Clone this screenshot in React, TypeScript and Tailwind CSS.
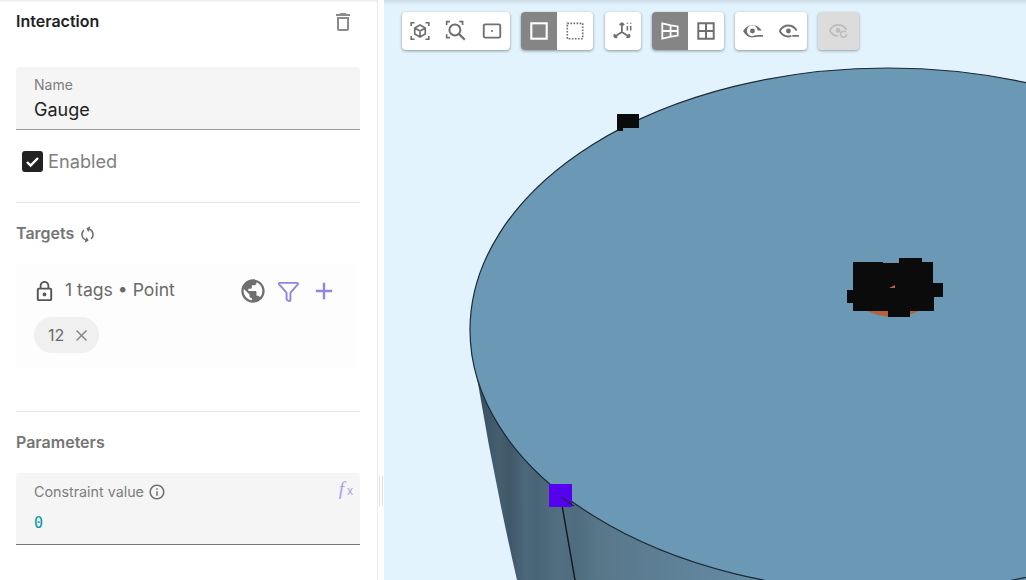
import { Funnel } from "lucide-react";
import { MdAdd, MdClose, MdInfoOutline, MdLockOutline, MdOutlineDelete, MdPublic, MdSync } from "react-icons/md";

const G = "#6f6f6f";

function Btn({ active, children }: { active?: boolean; children: React.ReactNode }) {
  return (
    <div className={active ? "w-9 h-full flex items-center justify-center bg-[#858585] text-white" : "w-9 h-full flex items-center justify-center text-[#6f6f6f]"}>
      {children}
    </div>
  );
}

function Group({ children }: { children: React.ReactNode }) {
  return <div className="h-[38px] flex rounded bg-white overflow-hidden shadow-[0_1px_3px_rgba(0,0,0,0.4)]">{children}</div>;
}

function Ico({ children }: { children: React.ReactNode }) {
  return (
    <svg width="22" height="22" viewBox="0 0 20 20" fill="none" stroke="currentColor" strokeWidth="1.6">
      {children}
    </svg>
  );
}

const Corners = () => <path d="M2 5.500V2.500h3M15 2.500h3v3M18 14.500v3h-3M5 17.500H2v-3" strokeWidth="1.500" />;

function Canvas3D() {
  return (
    <svg className="absolute inset-0 w-full h-full" viewBox="0 0 642 580">
      <defs>
        <linearGradient id="side" x1="93" x2="642" y1="0" y2="0" gradientUnits="userSpaceOnUse">
          <stop offset="0" stopColor="#37505f" />
          <stop offset="0.04" stopColor="#445f70" />
          <stop offset="0.06" stopColor="#3f5868" />
          <stop offset="0.09" stopColor="#4c697b" />
          <stop offset="0.11" stopColor="#486476" />
          <stop offset="0.15" stopColor="#536f82" />
          <stop offset="0.18" stopColor="#4f6c7f" />
          <stop offset="0.22" stopColor="#587789" />
          <stop offset="0.34" stopColor="#5d7f95" />
          <stop offset="0.65" stopColor="#6b98b4" />
        </linearGradient>
      </defs>
      <path d="M93 378 Q110 480 133 580 H642 V400 Z" fill="url(#side)" />
      <path d="M178 505 L191 580" stroke="#10181d" strokeWidth="1.400" />
      <ellipse cx="504" cy="330" rx="418" ry="262" fill="#6b98b4" stroke="#1c2a33" strokeWidth="1.200" />
      <path d="M233 114H255V128H239V131H233Z" fill="#0b0b0b" />
      <rect x="165" y="484" width="23" height="23" fill="#5500ee" />
      <path d="M177 497 L190 506" stroke="#1c2a33" strokeWidth="1.200" />
      <path d="M481 310 Q510 324 537 310Z" fill="#b5623a" />
      <path d="M469 262H499V263H515V258H538V262H549V283H559V297H550V311H526V317H504V311H469V303H463V290H469Z" fill="#0b0b0b" />
      <path d="M505 288 l6 -3 v3z" fill="#b5623a" />
    </svg>
  );
}

export default function App() {
  return (
    <div className="w-[1026px] h-[580px] flex overflow-hidden bg-white font-['Inter','Liberation_Sans',sans-serif]">
      <aside className="relative w-[378px] h-full shrink-0 border-r border-[#ebebeb] pl-4 pr-[17px] shadow-[inset_0_4px_3px_-3px_rgba(0,0,0,0.1)]">
        <div className="flex items-center justify-between h-[14px] mt-[14px] pr-[5px]">
          <h1 className="text-[16px] leading-none font-semibold text-[#222]">Interaction</h1>
          <MdOutlineDelete size={24} color="#8a8a8a" className="relative top-px" />
        </div>
        <div className="mt-[39px] h-[63px] bg-[#f5f5f5] rounded-t border-b border-[#999] pl-[18px] pt-[10px]">
          <div className="text-[14px] leading-[15px] text-[#7d7d7d]">Name</div>
          <div className="text-[18px] leading-[22px] mt-[7px] text-[#222]">Gauge</div>
        </div>
        <div className="flex items-center mt-[21px] ml-[6px] h-[21px]">
          <div className="w-[21px] h-[21px] rounded-[3px] bg-[#222] flex items-center justify-center">
            <svg width="15" height="15" viewBox="0 0 15 15" fill="none" stroke="#fff" strokeWidth="2.400"><path d="M2 8l3.600 3.600L13 4" /></svg>
          </div>
          <span className="ml-[5px] text-[18.200px] leading-[23px] text-[#808080]">Enabled</span>
        </div>
        <div className="h-px bg-[#e4e4e4] mt-[30px]" />
        <div className="flex items-center mt-[21px] h-[18px]">
          <span className="text-[16px] font-semibold text-[#757575]">Targets</span>
          <MdSync size={19} color={G} className="ml-[4px] rotate-[20deg] relative top-px" />
        </div>
        <div className="mt-[22px] w-[340px] h-[104px] bg-[#fdfdfd] pl-[18px] pt-[15px]">
          <div className="flex items-center h-6">
            <MdLockOutline size={23} color="#555" className="-ml-px" />
            <span className="ml-[9px] w-[174px] text-[17.600px] text-[#6a6a6a] relative -top-px">1 tags • Point</span>
            <MdPublic size={28} color={G} />
            <Funnel size={23} color="#9384dd" strokeWidth={2} className="ml-[10px]" />
            <MdAdd size={28} color="#9384dd" className="ml-[10px]" />
          </div>
          <div className="mt-[14px] w-[65px] h-[36px] rounded-full bg-[#f0f0f0] flex items-center pl-[14px]">
            <span className="text-[16px] text-[#6a6a6a]">12</span>
            <MdClose size={19} color="#8a8a8a" className="ml-[8px]" />
          </div>
        </div>
        <div className="h-px bg-[#e4e4e4] mt-[43px]" />
        <div className="mt-[21px] h-[18px] flex items-center">
          <span className="text-[16px] font-semibold text-[#757575]">Parameters</span>
        </div>
        <div className="relative mt-[22px] h-[72px] bg-[#f5f5f5] rounded-t border-b border-[#777] pl-[18px] pt-[10px]">
          <div className="flex items-center h-[18px]">
            <span className="text-[14.300px] text-[#7d7d7d]">Constraint value</span>
            <MdInfoOutline size={18} color={G} className="ml-[4px]" />
          </div>
          <div className="mt-[12px] text-[15px] leading-[20px] text-[#0097a7] font-['DejaVu_Sans_Mono',monospace]">0</div>
          <span className="absolute right-[7px] top-[6px] text-[19px] leading-[20px] italic text-[#a99de6] font-['Liberation_Serif',serif]">
            f<span className="ml-[3px] text-[12px] not-italic font-['Liberation_Sans',sans-serif]">x</span>
          </span>
        </div>
      </aside>
      <div className="w-[6px] h-full shrink-0 flex items-center">
        <div className="relative top-[201px] ml-px w-1 h-[30px] border-x border-[#ddd]" />
      </div>
      <main className="relative flex-1 h-full bg-[#e2f3fe] overflow-hidden">
        <Canvas3D />
        <div className="absolute inset-x-0 top-0 h-[5px] bg-gradient-to-b from-black/10 to-transparent" />
        <div className="absolute left-[18px] top-3 flex">
          <Group>
            <Btn>
              <Ico>
                <Corners />
                <path d="M10 4.600l4.800 2.700v5.400L10 15.400l-4.800-2.700V7.300zM5.200 7.300L10 10l4.800-2.700M10 10v5.400" strokeWidth="1.500" />
              </Ico>
            </Btn>
            <Btn>
              <Ico>
                <path d="M1.500 4.500v-3h3M13 1.500h3v3M1.500 13v3h3" strokeWidth="1.500" />
                <circle cx="9" cy="9" r="5" strokeWidth="1.800" />
                <path d="M12.600 12.600l5.400 5.400" strokeWidth="2" />
              </Ico>
            </Btn>
            <Btn>
              <Ico>
                <rect x="2.500" y="4" width="15" height="12" rx="1.200" strokeWidth="1.700" />
                <circle cx="10" cy="10" r="1" fill="currentColor" stroke="none" />
              </Ico>
            </Btn>
          </Group>
          <div className="ml-[11px]">
            <Group>
              <Btn active>
                <Ico><rect x="3" y="3" width="14" height="14" strokeWidth="1.900" /></Ico>
              </Btn>
              <Btn>
                <Ico><rect x="3" y="3" width="14" height="14" strokeWidth="1.500" strokeDasharray="1.500 1.300" /></Ico>
              </Btn>
            </Group>
          </div>
          <div className="ml-3">
            <Group>
              <Btn>
                <Ico>
                  <path d="M9 11V2.500M9 2.500L7 4.700M9 2.500l2 2.200M9 11l-7 4.500M9 11l7 4.500M2 15.500l.4-2.800M2 15.500l2.900.4M16 15.500l-.4-2.800M16 15.500l-2.900.4" strokeWidth="1.600" />
                  <path d="M14 2.500v1M14 5.500v4M17 2.500v1M17 5.500v4" strokeWidth="1.400" />
                </Ico>
              </Btn>
            </Group>
          </div>
          <div className="ml-[11px]">
            <Group>
              <Btn active>
                <Ico>
                  <path d="M3 3l8 1.800 6 1v8.400l-6 1L3 17zM3 10h14M10.500 5v10" strokeWidth="1.600" />
                </Ico>
              </Btn>
              <Btn>
                <Ico><path d="M3 3h14v14H3zM3 10h14M10 3v14" strokeWidth="1.800" /></Ico>
              </Btn>
            </Group>
          </div>
          <div className="ml-[11px]">
            <Group>
              <Btn>
                <Ico>
                  <path fillRule="evenodd" clipRule="evenodd" d="M1 10c2-3.600 5-5.200 8.300-5.200S16 6.400 18 9.500h-3.800a4.900 4.900 0 1 0-2 4.200l1.500 1.500c-1.200.4-2.900.6-4.400.6C6 15.800 3 13.600 1 10z" fill="currentColor" stroke="none" />
                  <circle cx="9.500" cy="10" r="2.200" fill="currentColor" stroke="none" />
                  <path d="M13 14.500h6" strokeWidth="1.600" />
                </Ico>
              </Btn>
              <Btn>
                <Ico>
                  <path d="M1.500 10c2-3.400 4.700-5 7.800-5s5.800 1.600 7.700 4.500M1.500 10c2 3.400 4.700 5 7.800 5 1 0 2-.2 2.900-.5" strokeWidth="1.700" />
                  <circle cx="9.500" cy="10" r="2.200" fill="currentColor" stroke="none" />
                  <path d="M13 14.500h6" strokeWidth="1.600" />
                </Ico>
              </Btn>
            </Group>
          </div>
          <div className="ml-[11px] h-[38px] w-[41px] rounded bg-[#dcdcdc] flex items-center justify-center text-[#bdbdbd] shadow-[0_1px_3px_rgba(0,0,0,0.35)]">
            <Ico>
              <path d="M1.500 9.500c2-3.400 4.700-5 7.800-5s5.800 1.600 7.700 4.500M1.500 9.500c2 3.400 4.700 5 7.300 5" strokeWidth="1.600" />
              <circle cx="9.200" cy="9.500" r="2.200" fill="currentColor" stroke="none" />
              <path d="M17 13a2.800 2.800 0 1 1-.8-2" strokeWidth="1.400" />
            </Ico>
          </div>
        </div>
      </main>
    </div>
  );
}
